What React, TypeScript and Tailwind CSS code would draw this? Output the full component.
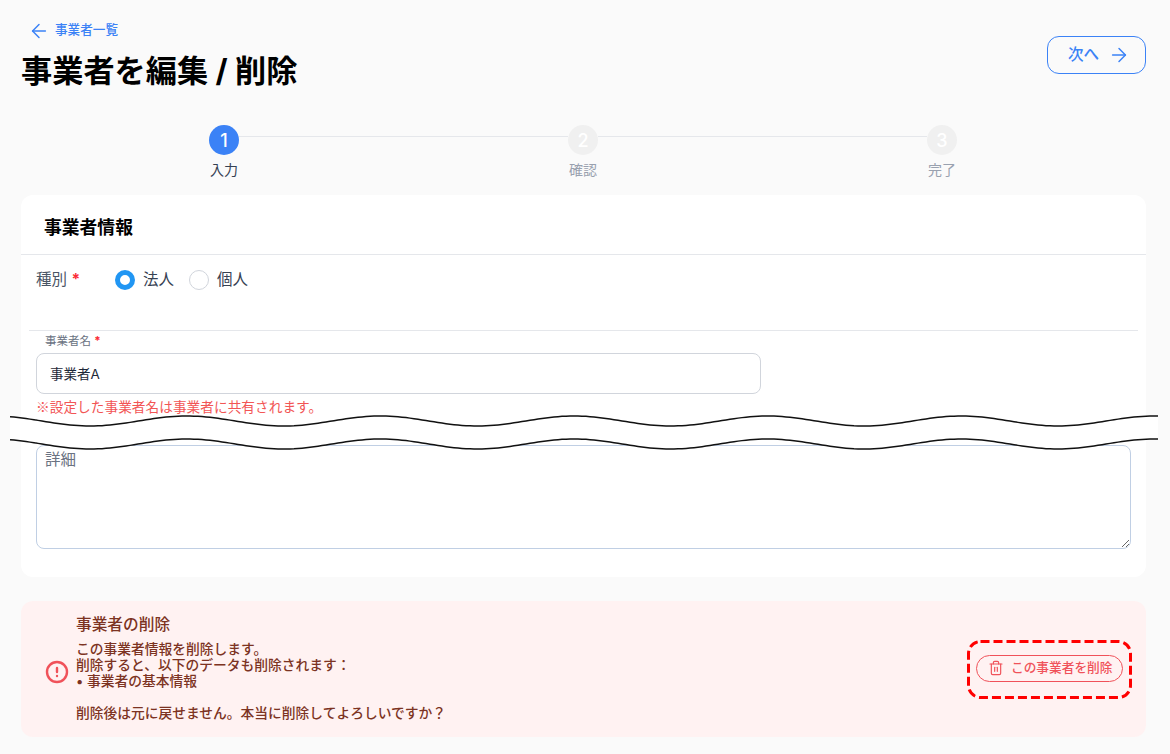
import { ArrowLeft, ArrowRight, CircleAlert, Trash2 } from 'lucide-react';

const steps = [
  { no: 1, label: '入力', active: true },
  { no: 2, label: '確認', active: false },
  { no: 3, label: '完了', active: false },
];

// wave of the "cut" mark over the form
function wavePath(offsetY: number) {
  const pts: string[] = [];
  for (let x = 0; x <= 1149; x += 4) {
    const y = offsetY + 8 - 5 * Math.cos(((x - 177) / 193.5) * Math.PI * 2);
    pts.push(`${x} ${y.toFixed(2)}`);
  }
  return pts;
}

function CutMark() {
  const top = wavePath(0);
  const bottom = wavePath(23);
  return (
    <svg width="1149" height="40" viewBox="0 0 1149 40" className="absolute left-[10px] top-[413px]">
      <path d={`M${top.join(' L')} L${[...bottom].reverse().join(' L')} Z`} fill="#ffffff" />
      <path d={`M${top.join(' L')}`} fill="none" stroke="#111111" strokeWidth="1.5" />
      <path d={`M${bottom.join(' L')}`} fill="none" stroke="#111111" strokeWidth="1.5" />
    </svg>
  );
}

export default function App() {
  return (
    <div
      className="relative min-h-screen bg-[#fafafa] pl-[21px] pr-[24px] pt-[22px] pb-[17px]"
      style={{ fontFamily: 'Inter, "Noto Sans CJK JP", sans-serif' }}
    >
      {/* Header */}
      <div className="flex justify-between h-[100px]">
        <div>
          <a className="flex items-center gap-[5px] pl-[7px] h-[17px] text-[12.6px] font-medium text-[#3b82f6]">
            <ArrowLeft size={22} strokeWidth={1.6} />
            事業者一覧
          </a>
          <h1 className="mt-[12px] text-[31.2px] leading-[40px] font-bold text-black">事業者を編集 / 削除</h1>
        </div>
        <button className="mt-[14px] flex items-center gap-[9px] pl-[20px] w-[99px] h-[38px] rounded-xl border border-[#3b82f6] text-[15.5px] font-medium text-[#3b82f6]">
          次へ
          <ArrowRight size={22} strokeWidth={1.6} />
        </button>
      </div>

      {/* Stepper */}
      <div className="flex h-[73px] pl-[173px]">
        {steps.map((step, i) => (
          <div key={step.no} className={`relative shrink-0 ${i === 2 ? 'w-[60px]' : 'w-[359px]'}`}>
            <div className="w-[60px] flex flex-col items-center">
              <div
                className={`flex items-center justify-center w-[30px] h-[30px] mt-[3px] rounded-full text-[18px] font-medium text-white ${
                  step.active ? 'bg-[#3b82f6]' : 'bg-[#f0f0f0]'
                }`}
              >
                {step.no}
              </div>
              <span className={`mt-[5px] text-[14px] leading-[20px] ${step.active ? 'text-gray-700' : 'text-gray-400'}`}>
                {step.label}
              </span>
            </div>
            {i < 2 && <div className="absolute left-[45px] top-[14px] w-[329px] h-px bg-gray-200" />}
          </div>
        ))}
      </div>

      {/* Form card */}
      <div className="h-[382px] rounded-xl bg-white">
        <div className="h-[60px] flex items-center pl-[23px] pt-[8px] border-b border-gray-200">
          <h2 className="text-[17.8px] font-bold text-black">事業者情報</h2>
        </div>
        <div className="flex items-center h-[50px] mx-[8px] pl-[7px] text-[15.5px]">
          <span className="w-[79px] text-gray-600">
            種別 <span className="font-bold text-red-500">*</span>
          </span>
          <span className="w-[20px] h-[20px] rounded-full border-[5px] border-[#2196f3] bg-white" />
          <span className="ml-[8px] text-gray-700">法人</span>
          <span className="ml-[15px] w-[20px] h-[20px] rounded-full border border-gray-300 bg-white" />
          <span className="ml-[8px] text-gray-700">個人</span>
        </div>
        <div className="mx-[8px] mt-[25px] pl-[7px] border-t border-gray-200">
          <label className="block pl-[9px] pt-[2px] h-[22px] text-[11.5px] leading-[17px] text-gray-500">
            事業者名 <span className="font-bold text-red-500">*</span>
          </label>
          <input
            defaultValue="事業者A"
            className="block w-[725px] h-[41px] rounded-lg border border-gray-300 pl-[13px] pb-[2px] text-[13.5px] font-normal text-gray-800 outline-none"
          />
          <p className="mt-[2px] text-[13.7px] leading-[20px] text-[#f25555]">
            <span style={{ fontFamily: '"Noto Sans CJK JP", sans-serif' }}>※</span>設定した事業者名は事業者に共有されます。
          </p>
          <textarea
            placeholder="詳細"
            className="block mt-[28px] w-[1095px] h-[104px] rounded-lg border border-[#c0cfe4] px-[8px] py-[2px] text-[15.5px] outline-none placeholder:text-gray-500"
          />
        </div>
      </div>

      {/* Delete panel */}
      <div className="relative flex items-center justify-between mt-[24px] h-[136px] rounded-xl bg-[#fff2f2] pl-[24px] pr-[23px]">
        <div className="flex items-center gap-[7px]">
          <CircleAlert size={24} strokeWidth={2.4} className="text-[#f0525a] mt-[6px]" />
          <div className="mt-[-3px] text-[#7c3322]">
            <h3 className="text-[15.7px] leading-[20px] font-medium">事業者の削除</h3>
            <p className="mt-[6px] text-[13.75px] leading-[16px] font-medium">
              この事業者情報を削除します。
              <br />
              削除すると、以下のデータも削除されます：
              <br />• 事業者の基本情報
              <br />
              <br />
              削除後は元に戻せません。本当に削除してよろしいですか？
            </p>
          </div>
        </div>
        <button className="flex items-center gap-[7px] w-[147px] h-[27px] mt-[-2px] pl-[11px] rounded-full border border-[#f0525a] text-[12.7px] font-medium text-[#f0525a]">
          <Trash2 size={16} strokeWidth={1.75} />
          この事業者を削除
        </button>
        <svg width="165" height="59" viewBox="0 0 165 59" className="absolute left-[946px] top-[38.5px]">
          <rect x="1.5" y="1.5" width="162" height="56" rx="12" fill="none" stroke="#ff0000" strokeWidth="3" strokeDasharray="9 4" />
        </svg>
      </div>

      <CutMark />
    </div>
  );
}
